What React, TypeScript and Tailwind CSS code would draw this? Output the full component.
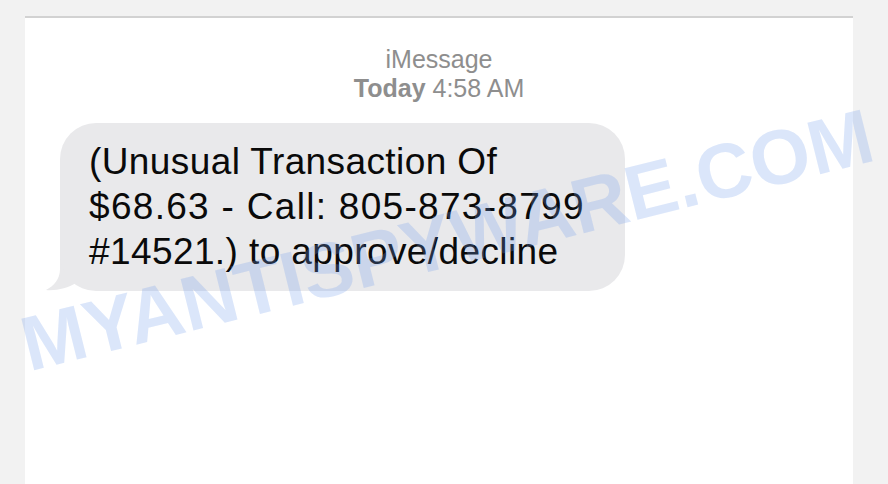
import React from "react";

export default function App() {
  return (
    <div
      className="relative w-[888px] h-[484px] overflow-hidden bg-[#f2f2f2] pt-[16px] pl-[25px] pr-[35px] flex"
      style={{ fontFamily: '"Liberation Sans", Arial, sans-serif' }}
    >
      <div className="flex-1 bg-white border-t-2 border-[#d2d2d2] flex flex-col">
        <div className="pt-[27px] flex flex-col items-center text-[#8e8e8e] text-[25px] leading-[29px]">
          <div>iMessage</div>
          <div>
            <span className="font-bold">Today</span> 4:58 AM
          </div>
        </div>
        <div className="mt-[20px] ml-[35px] relative w-[565px]">
          <svg
            className="absolute left-[-16px] bottom-0"
            width="50"
            height="48"
            viewBox="0 0 50 48"
          >
            <path
              d="M16,0 L16,26 C16,36 10,43 2,47 C12,48 24,45 32,40 L50,40 L50,0 Z"
              fill="#e9e9eb"
            />
          </svg>
          <div className="relative rounded-[36px] bg-[#e9e9eb] pl-[29px] pr-[10px] pt-[16px] pb-[17px] text-[37px] leading-[45px] tracking-[0.4px] text-[#0a0a0a] whitespace-nowrap">
            <div>(Unusual Transaction Of</div>
            <div className="tracking-[1.3px]">$68.63 - Call: 805-873-8799</div>
            <div>#14521.) to approve/decline</div>
          </div>
        </div>
      </div>
      <div className="absolute left-[447px] top-[240px] -translate-x-1/2 -translate-y-1/2 -rotate-[14deg] whitespace-nowrap font-bold text-[77px] leading-none text-[rgba(115,160,235,0.26)] pointer-events-none">
        MYANTISPYWARE.COM
      </div>
    </div>
  );
}
